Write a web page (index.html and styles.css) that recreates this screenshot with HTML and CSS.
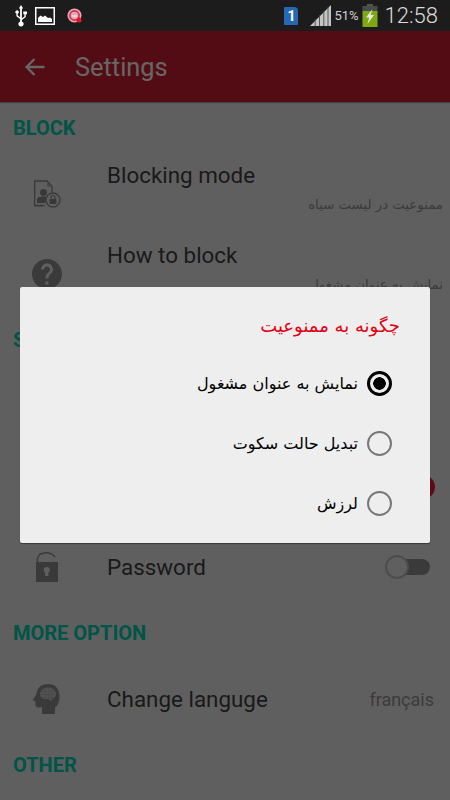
FILE: index.html
```html
<!DOCTYPE html>
<html lang="en">
<head>
    <meta charset="UTF-8">
    <meta name="viewport" content="width=device-width, initial-scale=1.0">
    <title>Settings</title>
    <link rel="stylesheet" href="styles.css">
</head>
<body>
<div id="status-bar">
    <svg class="st-usb" width="14" height="22" viewBox="0 0 14 22">
        <path d="M7 0l2.2 3.4H7.900V16.400a2.600 2.600 0 1 1-1.800 0V14L2.400 11.200V8.600a1.700 1.700 0 1 1 1.400 0v1.900l2.300 1.700V3.400H4.800z" fill="#fff"/>
        <path d="M7.900 13.200l2.500-1.800V9.200H9.300V6.400H13v2.800h-1.200v2.900L7.900 15z" fill="#fff"/>
    </svg>
    <svg class="st-pic" width="20" height="18" viewBox="0 0 20 18">
        <rect x="0.750" y="0.750" width="18.500" height="16.500" fill="#1c1c1c" stroke="#fff" stroke-width="1.500"/>
        <path d="M3 15V11l2.500-2.500 2.500 1.500 2-1.500 3 2.500 2-.5 2 1.500v3z" fill="#fff"/>
    </svg>
    <svg class="st-app" width="16" height="16" viewBox="0 0 16 16">
        <circle cx="7.500" cy="7.500" r="7" fill="#e8a7b4"/>
        <circle cx="7.500" cy="7.500" r="4.600" fill="none" stroke="#c9324e" stroke-width="1.600"/>
        <path d="M5 8h5" stroke="#f6e6ea" stroke-width="1.400"/>
        <circle cx="12" cy="12" r="2.600" fill="#e4132b"/>
    </svg>
    <div class="st-right">
        <div class="st-sim">1</div>
        <svg class="st-signal" width="21" height="21" viewBox="0 0 21 21">
            <path d="M0 21L21 0v21z" fill="#c4c4c4"/>
            <path d="M5.200 21V14M9.500 21V10M13.800 21V6M18 21V2" stroke="#4a4a4a" stroke-width="0.900"/>
        </svg>
        <div class="st-pct">51%</div>
        <svg class="st-batt" width="16" height="23" viewBox="0 0 16 23">
            <rect x="5" y="0" width="6" height="3" fill="#555"/>
            <rect x="0.500" y="2" width="15" height="5" fill="#4a4a4a"/>
            <rect x="0.500" y="7" width="15" height="16" fill="#7fa912"/>
            <path d="M10.500 5L4 13.600h3.200L5.400 20l6.600-9H8.600z" fill="#e6e6e6"/>
        </svg>
        <div class="st-time">12:58</div>
    </div>
</div>

<div id="screen">
    <div id="toolbar">
        <svg class="back" width="22" height="22" viewBox="0 0 22 22">
            <path d="M20.500 11H3M10.500 3L2.600 11l7.900 8" fill="none" stroke="#fff" stroke-width="2.400"/>
        </svg>
        <div class="toolbar-title">Settings</div>
    </div>

    <div class="section">BLOCK</div>
    <div class="row row-top">
        <div class="icon">
            <svg width="30" height="30" viewBox="0 0 30 30">
                <path d="M2.500 2h12.500l5 5.500v6M11 26.500H2.500z" fill="none" stroke="#8f8f8f" stroke-width="1.300"/>
                <path d="M2 2h1.300v25H2zM2 26h11v1.300H2z" fill="#8f8f8f"/>
                <path d="M15 2v6h5z" fill="#8f8f8f" opacity="0.5"/>
                <circle cx="11.500" cy="13.500" r="3.500" fill="#8f8f8f"/>
                <path d="M5 24v-3.500c0-2 2-3 6.500-3 2 0 3.500.2 4.500.6-1.500 1.500-2.500 3.500-2.500 5.900z" fill="#8f8f8f"/>
                <circle cx="21" cy="21" r="7" fill="#eee" stroke="#8f8f8f" stroke-width="1.300"/>
                <rect x="17.500" y="20" width="7" height="5" rx="0.800" fill="#8f8f8f"/>
                <path d="M19 20v-1.500a2 2 0 0 1 4 0V20" fill="none" stroke="#8f8f8f" stroke-width="1.200"/>
            </svg>
        </div>
        <div class="row-body">
            <div class="row-title">Blocking mode</div>
            <div class="row-sub" dir="rtl">ممنوعیت در لیست سیاه</div>
        </div>
    </div>
    <div class="row row-top row-line">
        <div class="icon">
            <svg width="30" height="30" viewBox="2 2 20 20">
                <path d="M12 2C6.480 2 2 6.480 2 12s4.480 10 10 10 10-4.480 10-10S17.520 2 12 2zm1 17h-2v-2h2v2zm2.070-7.750l-.9.920C13.450 12.900 13 13.500 13 15h-2v-.5c0-1.100.450-2.100 1.170-2.830l1.240-1.260c.370-.360.590-.860.590-1.410 0-1.100-.9-2-2-2s-2 .9-2 2H8c0-2.210 1.790-4 4-4s4 1.790 4 4c0 .880-.360 1.680-.930 2.250z" fill="#929292"/>
            </svg>
        </div>
        <div class="row-body">
            <div class="row-title">How to block</div>
            <div class="row-sub" dir="rtl">نمایش به عنوان مشغول</div>
        </div>
    </div>

    <div class="section">SETTINGS</div>
    <div class="row row-tall row-line"></div>
    <div class="row row-line">
        <div class="toggle toggle-on"><span class="thumb"></span></div>
    </div>
    <div class="row row-line">
        <div class="icon">
            <svg width="30" height="30" viewBox="0 0 30 30">
                <path d="M5.500 10V7.500C5.500 3 9 .8 14 .8c4 0 7 1.500 9 4.500" fill="none" stroke="#929292" stroke-width="1.600"/>
                <path d="M4 10h22v20H4z" fill="#929292"/>
                <circle cx="14.800" cy="18" r="3" fill="#eee"/>
                <path d="M13.600 19h2.400l.5 5h-3.400z" fill="#eee"/>
            </svg>
        </div>
        <div class="row-body">
            <div class="row-title">Password</div>
        </div>
        <div class="toggle"><span class="thumb"></span></div>
    </div>

    <div class="section">MORE OPTION</div>
    <div class="row row-line">
        <div class="icon">
            <svg width="30" height="30" viewBox="0 0 30 30">
                <path d="M16 0C9 0 5 4 4.500 9.500 4.300 11 2 14 1 15.500c-.4.700.4 1.300 2.500 1.800l-.2 3.200c0 1.500 1 3 3 3l3.700-.4V30H23v-6.500c3-2 4.500-5.500 4.500-11C27.500 4.500 23 0 16 0z" fill="#929292"/>
                <path d="M8 10c0-3.500 3.500-6.500 8-6.500s8 3 8 6.500c0 2.500-1.800 4.500-4 5l-1 2.500-2-2.500h-4c-2.500 0-5-2.500-5-5z" fill="#cfcfcf"/>
                <path d="M9 7.500h14M8.500 10.500h15M10 13.500h12M13 4v11M17 4v11M20 5v10" stroke="#b4b4b4" stroke-width="0.800"/>
            </svg>
        </div>
        <div class="row-body">
            <div class="row-title">Change languge</div>
        </div>
        <div class="row-value">français</div>
    </div>

    <div class="section">OTHER</div>

    <div id="dim">
        <div id="dialog">
            <div class="dialog-title" dir="rtl">چگونه به ممنوعیت</div>
            <div class="option" dir="rtl">
                <span class="radio radio-on"></span>
                <span>نمایش به عنوان مشغول</span>
            </div>
            <div class="option" dir="rtl">
                <span class="radio"></span>
                <span>تبدیل حالت سکوت</span>
            </div>
            <div class="option" dir="rtl">
                <span class="radio"></span>
                <span>لرزش</span>
            </div>
        </div>
    </div>
</div>
</body>
</html>
```

FILE: styles.css
```css
body {
    margin: 0;
    width: 450px;
    height: 800px;
    overflow: hidden;
    font-family: Roboto, "DejaVu Sans", sans-serif;
    background-color: #eee;
}

#status-bar {
    display: flex;
    align-items: center;
    height: 31px;
    padding: 0 12px 0 14px;
    background-color: #1c1c1c;
    box-sizing: border-box;
}

.st-pic {
    margin-left: 7px;
}

.st-app {
    margin-left: 12px;
}

.st-right {
    display: flex;
    align-items: center;
    margin-left: auto;
}

.st-sim {
    width: 14px;
    height: 18px;
    background-color: #2668b4;
    border-radius: 1px 4px 1px 1px;
    color: #fff;
    font-size: 14px;
    font-weight: bold;
    line-height: 18px;
    text-align: center;
}

.st-signal {
    margin-left: 12px;
}

.st-pct {
    margin-left: 3px;
    color: #d0d0d0;
    font-size: 13px;
}

.st-batt {
    margin-left: 3px;
}

.st-time {
    margin-left: 7px;
    color: #dcdcdc;
    font-size: 22px;
    font-weight: 300;
}

#screen {
    position: relative;
    height: 769px;
    overflow: hidden;
}

#toolbar {
    display: flex;
    align-items: center;
    height: 71px;
    padding-left: 24px;
    background-color: #d21e32;
    box-sizing: border-box;
    box-shadow: 0 1px 1px rgba(0, 0, 0, 0.3);
}

.toolbar-title {
    margin-left: 29px;
    padding-top: 1px;
    color: #fff;
    font-size: 25.400px;
}

.section {
    height: 52px;
    padding: 14px 0 0 13px;
    box-sizing: border-box;
    color: #00d2b4;
    font-size: 20px;
    font-weight: bold;
    line-height: 25px;
}

.row {
    display: flex;
    align-items: center;
    height: 80px;
    padding-left: 32px;
    box-sizing: border-box;
    position: relative;
}

.row-tall {
    height: 81px;
}

.row-line::after {
    content: "";
    position: absolute;
    left: 107px;
    right: 0;
    bottom: 0;
    height: 1px;
    background-color: #e0ebe8;
}

.icon {
    width: 30px;
    height: 30px;
    flex: none;
}

.row-body {
    flex: 1;
    margin-left: 45px;
}

.row-title {
    color: #424242;
    font-size: 22.400px;
    line-height: 28px;
}

.row-top .row-body {
    align-self: flex-start;
    padding-top: 7px;
}

.row-sub {
    margin: 2px 7px 0 0;
    color: #959595;
    font-family: "DejaVu Sans", sans-serif;
    font-size: 13.300px;
    line-height: 28px;
}

.row-value {
    margin-right: 16px;
    color: #959595;
    font-size: 18px;
}

.toggle {
    position: relative;
    width: 34px;
    height: 16px;
    margin: 0 20px 0 auto;
    background-color: #929292;
    border-radius: 8px;
    flex: none;
}

.thumb {
    position: absolute;
    left: -11px;
    top: -4px;
    width: 20px;
    height: 20px;
    background-color: #eee;
    border: 2px solid #bdbdbd;
    border-radius: 50%;
}

.toggle-on {
    background-color: #e88;
}

.toggle-on .thumb {
    left: auto;
    right: -5px;
    background-color: #e61e32;
    border-color: #e61e32;
}

#dim {
    position: absolute;
    left: 0;
    top: 0;
    right: 0;
    bottom: 0;
    display: flex;
    align-items: center;
    justify-content: center;
    padding-bottom: 1px;
    box-sizing: border-box;
    background-color: rgba(0, 0, 0, 0.6);
}

#dialog {
    width: 410px;
    height: 256px;
    box-sizing: border-box;
    background-color: #eee;
    border-radius: 2px;
    box-shadow: 0 1px 1px rgba(0, 0, 0, 0.4);
    font-family: "DejaVu Sans", sans-serif;
}

.dialog-title {
    height: 66px;
    padding-right: 30px;
    color: #e30014;
    font-size: 18px;
    line-height: 78px;
}

.option {
    display: flex;
    align-items: center;
    gap: 9px;
    height: 60px;
    padding-right: 38px;
    color: #000;
    font-size: 16px;
}

.radio {
    width: 25px;
    height: 25px;
    border: 2.500px solid #777;
    border-radius: 50%;
    box-sizing: border-box;
    flex: none;
}

.radio-on {
    border: 3px solid #000;
    background: radial-gradient(circle, #000 0, #000 6px, #eee 6.500px);
}
```
